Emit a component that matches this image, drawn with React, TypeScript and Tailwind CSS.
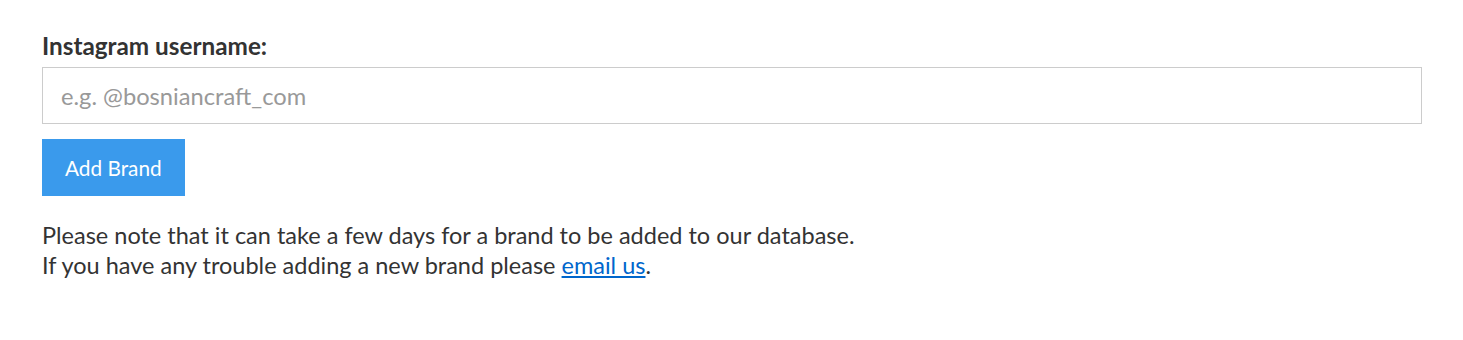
export default function App() {
  return (
    <div className="min-h-[340px] bg-white px-[42px] pt-[31px] font-['Lato','Liberation_Sans',sans-serif] text-[#333333]">
      <label className="block text-[24.3px] font-bold leading-[30px] text-[#333333]">
        Instagram username:
      </label>
      <input
        type="text"
        placeholder="e.g. @bosniancraft_com"
        className="mt-[6px] block h-[57px] w-[1380px] border border-[#cccccc] bg-white px-[18px] text-[23.7px] outline-none placeholder:text-[#999999]"
      />
      <button
        type="button"
        className="mt-[15px] h-[57px] bg-[#3a9aec] px-[23px] text-[20.8px] text-white"
      >
        Add Brand
      </button>
      <p className="mt-[24px] text-[23.5px] leading-[30px]">
        Please note that it can take a few days for a brand to be added to our database.
        <br />
        If you have any trouble adding a new brand please{" "}
        <a href="#" className="text-[#0066cc] underline">
          email us
        </a>
        .
      </p>
    </div>
  );
}
